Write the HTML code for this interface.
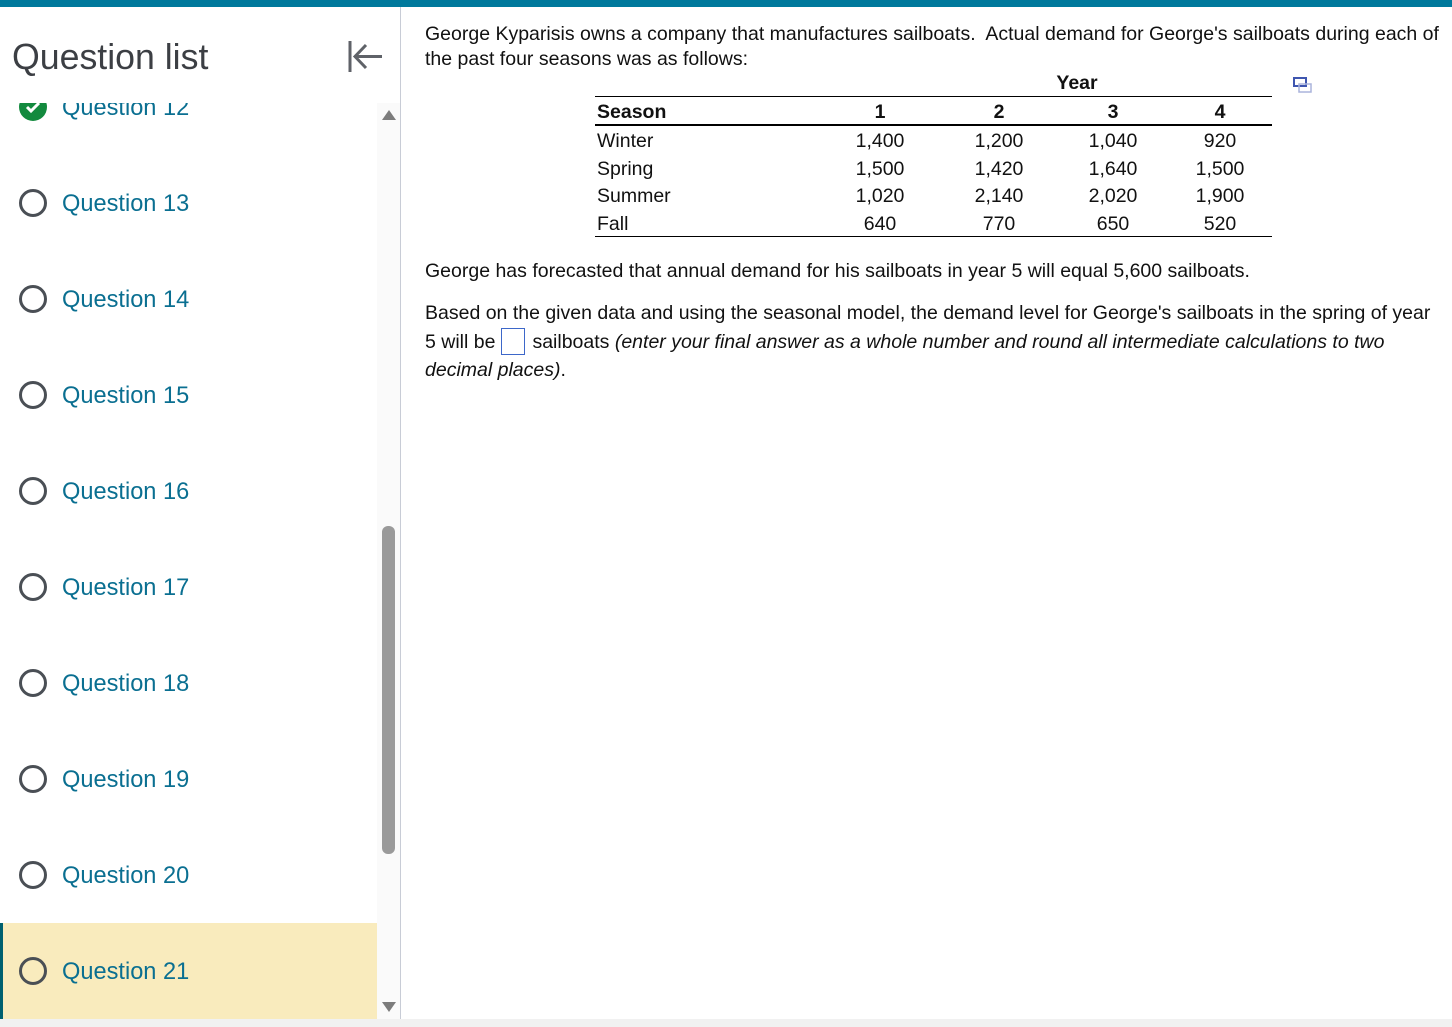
<!DOCTYPE html>
<html><head><style>
*{margin:0;padding:0;box-sizing:border-box}
body{width:1452px;height:1027px;position:relative;overflow:hidden;background:#fff;font-family:"Liberation Sans",Arial,sans-serif;color:#111}
.a{position:absolute;white-space:nowrap}
.q{position:absolute;left:0;width:377px;height:96px}
.q .c{position:absolute;left:19px;top:34px;width:28px;height:28px;border:3px solid #4a4f55;border-radius:50%}
.q .t{position:absolute;left:62px;top:36px;font-size:23.6px;color:#0a6f91}
.p{font-size:19.5px;line-height:28px}
.n{position:absolute;font-size:19.5px;transform:translateX(-50%)}
</style></head><body>
<div class="a" style="left:0;top:0;width:1452px;height:7px;background:#00799c"></div>
<div class="a" style="left:400px;top:7px;width:1px;height:1012px;background:#c8ccd6"></div>
<div class="a" style="left:0;top:1019px;width:1452px;height:8px;background:#f1f1f1"></div>
<div class="a" style="left:12px;top:37px;font-size:35.7px;color:#3c3f44">Question list</div>
<svg class="a" style="left:348px;top:40px" width="36" height="33" viewBox="0 0 36 33"><path d="M2 1V32M34 16.5H8M18 5L7 16.5L18 28" stroke="#5f6268" stroke-width="3" fill="none"/></svg>
<div class="a" style="left:0;top:103px;width:377px;height:916px;overflow:hidden">
 <div class="q" style="top:-44px"><div style="position:absolute;left:19px;top:34px;width:28px;height:28px;border-radius:50%;background:#138a3e"></div><svg style="position:absolute;left:23px;top:38px" width="20" height="20"><path d="M4 10l4 4 8-8" stroke="#fff" stroke-width="3" fill="none"/></svg><div class="t">Question 12</div></div>
 <div class="q" style="top:52px"><div class="c"></div><div class="t">Question 13</div></div>
 <div class="q" style="top:148px"><div class="c"></div><div class="t">Question 14</div></div>
 <div class="q" style="top:244px"><div class="c"></div><div class="t">Question 15</div></div>
 <div class="q" style="top:340px"><div class="c"></div><div class="t">Question 16</div></div>
 <div class="q" style="top:436px"><div class="c"></div><div class="t">Question 17</div></div>
 <div class="q" style="top:532px"><div class="c"></div><div class="t">Question 18</div></div>
 <div class="q" style="top:628px"><div class="c"></div><div class="t">Question 19</div></div>
 <div class="q" style="top:724px"><div class="c"></div><div class="t">Question 20</div></div>
 <div class="q" style="top:820px;background:#f9ebbd;border-left:3px solid #00606f"><div class="c" style="left:16px"></div><div class="t" style="left:59px">Question 21</div></div>
</div>
<div class="a" style="left:377px;top:103px;width:23px;height:916px;background:#fafafa"></div>
<div class="a" style="left:382px;top:110px;width:0;height:0;border-left:7px solid transparent;border-right:7px solid transparent;border-bottom:10px solid #7c7c7c"></div>
<div class="a" style="left:382px;top:1002px;width:0;height:0;border-left:7px solid transparent;border-right:7px solid transparent;border-top:10px solid #7c7c7c"></div>
<div class="a" style="left:382px;top:526px;width:13px;height:328px;background:#9a9a9a;border-radius:6px"></div>

<div class="a p" style="left:425px;top:22px;line-height:25px">George Kyparisis owns a company that manufactures sailboats.&nbsp; Actual demand for George's sailboats during each of<br>the past four seasons was as follows:</div>
<div class="n" style="left:1077px;top:72px;font-weight:bold">Year</div>
<svg class="a" style="left:1293px;top:77px" width="19" height="16"><rect x="1" y="1" width="12" height="8" fill="none" stroke="#3f56b0" stroke-width="2"/><rect x="6" y="7" width="12" height="8" fill="none" stroke="#aab4dc" stroke-width="1.5"/></svg>
<div class="a" style="left:595px;top:96px;width:677px;height:1px;background:#000"></div>
<div class="a" style="left:595px;top:124px;width:677px;height:2px;background:#000"></div>
<div class="a" style="left:595px;top:236px;width:677px;height:1px;background:#000"></div>
<div class="a" style="left:597px;top:101px;font-size:19.5px;font-weight:bold">Season</div>
<div class="n" style="left:880px;top:101px;font-weight:bold">1</div>
<div class="n" style="left:999px;top:101px;font-weight:bold">2</div>
<div class="n" style="left:1113px;top:101px;font-weight:bold">3</div>
<div class="n" style="left:1220px;top:101px;font-weight:bold">4</div>
<div class="a" style="left:597px;top:128px;font-size:19.5px;line-height:27.5px">Winter<br>Spring<br>Summer<br>Fall</div>
<div class="n" style="left:880px;top:128px;line-height:27.5px;text-align:center">1,400<br>1,500<br>1,020<br>640</div>
<div class="n" style="left:999px;top:128px;line-height:27.5px;text-align:center">1,200<br>1,420<br>2,140<br>770</div>
<div class="n" style="left:1113px;top:128px;line-height:27.5px;text-align:center">1,040<br>1,640<br>2,020<br>650</div>
<div class="n" style="left:1220px;top:128px;line-height:27.5px;text-align:center">920<br>1,500<br>1,900<br>520</div>
<div class="a p" style="left:425px;top:257px">George has forecasted that annual demand for his sailboats in year 5 will equal 5,600 sailboats.</div>
<div class="a p" style="left:425px;top:299px;line-height:28.5px">Based on the given data and using the seasonal model, the demand level for George's sailboats in the spring of year<br>5 will be<span style="display:inline-block;width:24px;height:27px;border:1px solid #3d67c9;vertical-align:-7px;margin:0 7px 0 6px"></span>sailboats <i>(enter your final answer as a whole number and round all intermediate calculations to two<br>decimal places)</i>.</div>
</body></html>
